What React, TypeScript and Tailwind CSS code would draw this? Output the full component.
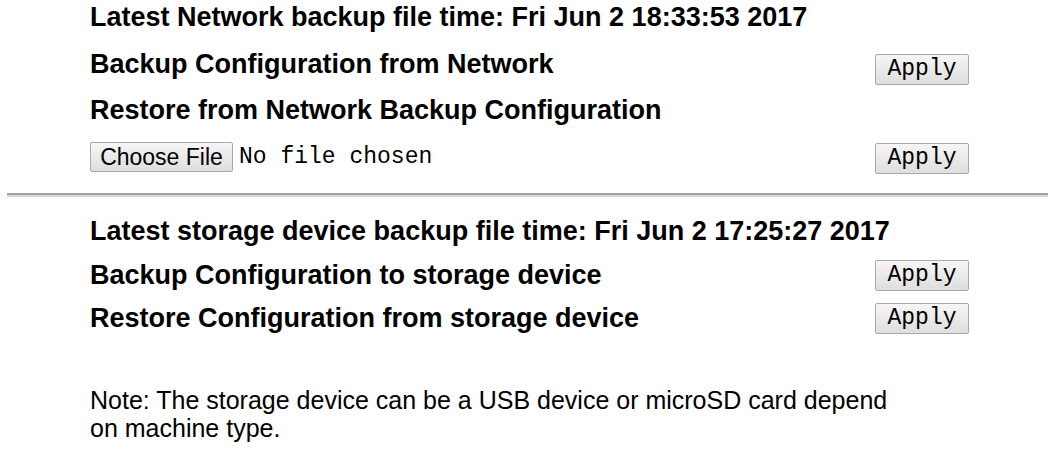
import React from 'react';

const label = "font-['Liberation_Sans',Arial,sans-serif] font-bold text-[27px] leading-[30px] text-black";
const mono = "font-['Liberation_Mono','Courier_New',monospace] text-[23px] leading-[26px]";

const ApplyButton: React.FC<{ className?: string }> = ({ className = '' }) => (
  <button
    type="button"
    className={`${mono} w-[94px] h-[31px] border border-[#a9a9a9] rounded-[2px] bg-gradient-to-b from-[#f6f6f6] to-[#dedede] text-black ${className}`}
  >
    Apply
  </button>
);

const Row: React.FC<{ className?: string; children: React.ReactNode }> = ({ className = '', children }) => (
  <div className={`flex items-center justify-between h-[34px] ${className}`}>{children}</div>
);

export default function App() {
  return (
    <div className="w-[1048px] h-[463px] bg-white overflow-hidden">
      {/* network backup */}
      <div className="pl-[90px] w-[969px]">
        <Row>
          <span className={label}>Latest Network backup file time: Fri Jun 2 18:33:53 2017</span>
        </Row>
        <Row className="mt-[13px]">
          <span className={label}>Backup Configuration from Network</span>
          <ApplyButton className="mt-[10px]" />
        </Row>
        <Row className="mt-[12px]">
          <span className={label}>Restore from Network Backup Configuration</span>
        </Row>
        <Row className="mt-[13px]">
          <div className="flex items-center gap-[6px]">
            <button
              type="button"
              className="font-['Liberation_Sans',Arial,sans-serif] text-[23px] leading-[26px] w-[143px] h-[30px] border border-[#a9a9a9] rounded-[2px] bg-gradient-to-b from-[#f6f6f6] to-[#dedede] text-black"
            >
              Choose File
            </button>
            <span className={`${mono} text-black`}>No file chosen</span>
          </div>
          <ApplyButton className="mt-[2px]" />
        </Row>
      </div>

      <div className="ml-[7px] mt-[19px] h-[4px] border-t-2 border-b-2 border-t-[#a0a0a0] border-b-[#d4d4d4]" />

      {/* storage device backup */}
      <div className="pl-[90px] w-[969px]">
        <Row className="mt-[17px]">
          <span className={label}>Latest storage device backup file time: Fri Jun 2 17:25:27 2017</span>
        </Row>
        <Row className="mt-[10px]">
          <span className={label}>Backup Configuration to storage device</span>
          <ApplyButton />
        </Row>
        <Row className="mt-[9px]">
          <span className={label}>Restore Configuration from storage device</span>
          <ApplyButton />
        </Row>
        <p className="mt-[51px] w-[820px] font-['Liberation_Sans',Arial,sans-serif] text-[25px] leading-[28px] text-black">
          Note: The storage device can be a USB device or microSD card depend on machine type.
        </p>
      </div>
    </div>
  );
}
